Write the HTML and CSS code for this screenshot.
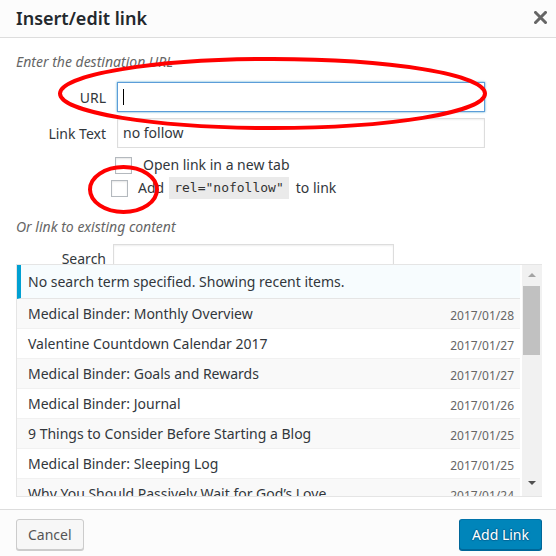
FILE: index.html
```html
<!DOCTYPE html>
<html lang="en">
<head>
<meta charset="utf-8">
<title>Insert/edit link</title>
<link rel="stylesheet" href="styles.css">
</head>
<body>
<div class="dialog">
  <header class="hd">
    <h1 class="title">Insert/edit link</h1>
    <span class="close" aria-label="Close">
      <svg width="13" height="13" viewBox="0 0 13 13"><path d="M1.5 1.5 L11.5 11.5 M11.5 1.5 L1.5 11.5" stroke="#666" stroke-width="3" stroke-linecap="square"/></svg>
    </span>
  </header>
  <main class="bd">
    <p class="howto">Enter the destination URL</p>
    <div class="field">
      <label class="lbl">URL</label>
      <div class="input focus"><span class="caret"></span></div>
    </div>
    <div class="field gap6">
      <label class="lbl">Link Text</label>
      <div class="input">no follow</div>
    </div>
    <div class="check c1"><span class="box"></span><span>Open link in a new tab</span></div>
    <div class="check c2"><span class="box"></span><span>Add</span><code class="code">rel="nofollow"</code><span>to link</span></div>
    <p class="howto second">Or link to existing content</p>
    <div class="field search">
      <label class="lbl">Search</label>
      <div class="input"></div>
    </div>
    <div class="results">
      <div class="list">
        <div class="notice">No search term specified. Showing recent items.</div>
        <ul class="items">
          <li class="item alt"><span class="name">Medical Binder: Monthly Overview</span><span class="date">2017/01/28</span></li>
          <li class="item"><span class="name">Valentine Countdown Calendar 2017</span><span class="date">2017/01/27</span></li>
          <li class="item alt"><span class="name">Medical Binder: Goals and Rewards</span><span class="date">2017/01/27</span></li>
          <li class="item"><span class="name">Medical Binder: Journal</span><span class="date">2017/01/26</span></li>
          <li class="item alt"><span class="name">9 Things to Consider Before Starting a Blog</span><span class="date">2017/01/25</span></li>
          <li class="item"><span class="name">Medical Binder: Sleeping Log</span><span class="date">2017/01/25</span></li>
          <li class="item alt"><span class="name">Why You Should Passively Wait for God’s Love</span><span class="date">2017/01/24</span></li>
        </ul>
      </div>
      <div class="sb">
        <div class="sb-btn"><span class="tri-up"></span></div>
        <div class="thumb"></div>
        <div class="sb-btn down"><span class="tri-down"></span></div>
      </div>
    </div>
  </main>
  <footer class="ft">
    <button class="btn">Cancel</button>
    <button class="btn primary">Add Link</button>
  </footer>
  <svg class="marks" width="556" height="556" viewBox="0 0 556 556">
    <ellipse cx="272.5" cy="93.5" rx="212.5" ry="34.5" fill="none" stroke="#f00" stroke-width="4"/>
    <ellipse cx="123.5" cy="189.5" rx="33.5" ry="22.5" fill="none" stroke="#f00" stroke-width="4"/>
  </svg>
</div>
</body>
</html>
```
FILE: styles.css
```css
* { box-sizing: border-box; }
html, body { margin: 0; padding: 0; background: #fff; }
body { font-family: "Noto Sans", "Open Sans", sans-serif; font-size: 14px; line-height: 20px; color: #32373c; }

.dialog { position: relative; width: 556px; height: 556px; display: flex; flex-direction: column; overflow: hidden; background: #fff; }

.hd { height: 38px; background: #fcfcfc; border-bottom: 1px solid #ddd; display: flex; align-items: flex-start; justify-content: space-between; flex: none; }
.title { margin: 0; padding-left: 16px; font-size: 18px; line-height: 37px; font-weight: 600; color: #23282d; }
.close { display: block; width: 13px; height: 13px; margin: 11px 9px 0 0; }
.close svg { display: block; }

.bd { flex: 1; padding: 0 14px 0 16px; }
.howto { margin: 14px 0 0; font-style: italic; color: #666; }
.howto.second { margin-top: 18px; }

.field { display: grid; grid-template-columns: 90px 368px; column-gap: 11px; margin-top: 10px; }
.field.gap6 { margin-top: 6px; }
.lbl { text-align: right; padding-top: 6px; line-height: 20px; color: #32373c; }
.input { height: 30px; border: 1px solid #ddd; box-shadow: inset 0 1px 2px rgba(0,0,0,0.07); padding: 4px 5px; line-height: 20px; color: #32373c; background: #fff; }
.input.focus { border-color: #5b9dd9; box-shadow: 0 0 2px rgba(30,140,190,0.8); }
.caret { display: block; width: 1px; height: 16px; margin-top: 2px; background: #000; }

.field.search { grid-template-columns: 90px 281px; column-gap: 7px; margin-top: 7px; }
.field.search .lbl { padding-top: 5px; }

.check { display: flex; align-items: center; }
.check.c1 { margin-top: 7px; height: 20px; padding-left: 99px; }
.check.c2 { margin-top: 2px; height: 22px; padding-left: 95px; }
.box { width: 17px; height: 17px; border: 1px solid #b4b9be; background: #fff; box-shadow: inset 0 1px 2px rgba(0,0,0,0.1); flex: none; }
.c1 .box { margin-right: 11px; }
.c2 .box { margin-right: 10px; }
.code { font-family: "DejaVu Sans Mono", "Liberation Mono", monospace; font-size: 13px; line-height: 18px; padding: 2px 5px; background: #eaeaea; color: #333; margin: 0 7px 0 5px; }

.results { position: relative; z-index: 1; margin-top: -10px; height: 233px; display: flex; border: 1px solid #e5e5e5; border-right: none; background: #fff; }
.list { width: 503px; overflow: hidden; }
.notice { border-left: 4px solid #00a0d2; background: #f7fcfe; padding: 7px 7px 6px; border-bottom: 1px solid #e5e5e5; line-height: 20px; color: #32373c; }
.items { list-style: none; margin: 0; padding: 0; }
.item { display: flex; justify-content: space-between; align-items: flex-start; height: 30px; padding: 5px 6px 4px 11px; border-bottom: 1px solid #f1f1f1; background: #fff; }
.item.alt { background: #f9f9f9; }
.name { white-space: nowrap; color: #32373c; line-height: 20px; }
.date { font-size: 12px; line-height: 17px; color: #666; padding-top: 3px; white-space: nowrap; }

.sb { width: 20px; margin-left: 2px; background: #f1f1f1; display: flex; flex-direction: column; }
.sb-btn { height: 20px; display: flex; align-items: center; justify-content: center; flex: none; }
.sb-btn.down { margin-top: auto; height: 22px; align-items: flex-start; padding-top: 7px; }
.tri-up { width: 0; height: 0; border-left: 4px solid transparent; border-right: 4px solid transparent; border-bottom: 4px solid #a3a3a3; margin-right: 1px; }
.tri-down { width: 0; height: 0; border-left: 4px solid transparent; border-right: 4px solid transparent; border-top: 4px solid #505050; margin-right: 1px; }
.thumb { height: 69px; margin: 1px 2px 0 1px; background: #c1c1c1; }

.ft { flex: none; height: 47px; border-top: 1px solid #ddd; background: #fcfcfc; display: flex; justify-content: space-between; align-items: flex-start; padding: 9px 14px 0 16px; }
.btn { font-family: "Noto Sans", "Open Sans", sans-serif; font-size: 14px; height: 31px; line-height: 29px; padding: 0 11px; border: 1px solid #ccc; border-radius: 3px; background: #f7f7f7; color: #555; box-shadow: 0 1px 0 #ccc; margin: 0; cursor: pointer; }
.btn.primary { background: #0085ba; border-color: #0073aa #006799 #006799; color: #fff; box-shadow: 0 1px 0 #006799; text-shadow: 0 -1px 1px #006799, 1px 0 1px #006799, 0 1px 1px #006799, -1px 0 1px #006799; padding: 0 12px; }

.marks { position: absolute; top: 0; left: 0; pointer-events: none; z-index: 5; }
```
